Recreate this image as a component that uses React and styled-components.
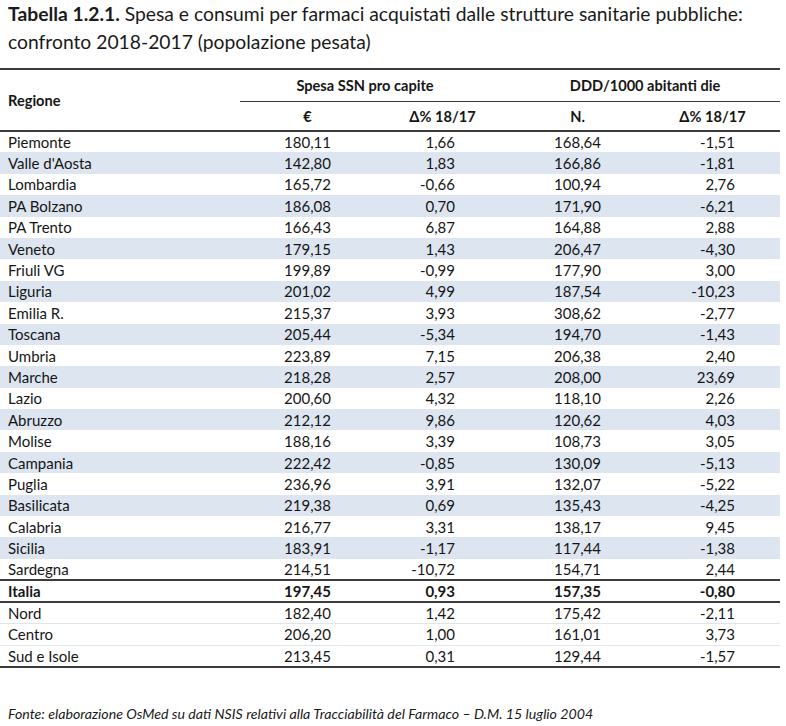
import React from "react";
import styled, { createGlobalStyle } from "styled-components";

const GlobalStyle = createGlobalStyle`
  body {
    margin: 0;
    background: #ffffff;
    font-family: "Lato", "Open Sans", sans-serif;
    color: #1a1a1a;
  }
`;

const Page = styled.div`
  width: 786px;
  height: 726px;
  overflow: hidden;
`;

const Title = styled.h1`
  margin: 0;
  padding: 0 8px;
  font-size: 19.3px;
  line-height: 28px;
  font-weight: 400;
  color: #1a1a1a;
  white-space: nowrap;
`;

const Table = styled.table`
  margin-top: 12px;
  width: 780px;
  border-collapse: collapse;
  table-layout: fixed;
  font-size: 15px;
  color: #161616;
  border-top: 2px solid #3c3c3c;
  border-bottom: 2px solid #3c3c3c;
`;

const HeadCell = styled.th`
  font-weight: 700;
  font-size: 14.6px;
  text-align: ${(p) => (p.left ? "left" : "center")};
  padding: ${(p) => (p.left ? "0 8px" : `0 ${p.pr || 0}px 0 0`)};
  height: ${(p) => p.h || 28}px;
  border-bottom: ${(p) => (p.rule ? "1.5px solid #3c3c3c" : "none")};
  white-space: nowrap;
`;

const HeadBottom = styled.tr`
  border-bottom: 2px solid #3c3c3c;
`;

const Row = styled.tr`
  height: 21.4px;
  background: ${(p) => (p.shaded ? "#dce5f0" : "#ffffff")};
  font-weight: ${(p) => (p.bold ? 700 : 400)};
  border-top: ${(p) => (p.bold ? "2px solid #3c3c3c" : p.thin ? "1px solid #dfe5ee" : "none")};
  border-bottom: ${(p) => (p.bold ? "2px solid #3c3c3c" : "none")};
`;

const Cell = styled.td`
  padding: 0 ${(p) => p.pr || 0}px 0 ${(p) => p.pl || 0}px;
  text-align: ${(p) => p.align || "center"};
  white-space: nowrap;
  line-height: 20px;
`;

const Footer = styled.p`
  margin: 37px 0 0;
  padding-left: 8px;
  font-size: 14.2px;
  font-style: italic;
  color: #1a1a1a;
  white-space: nowrap;
`;

const rows = [
  ["Piemonte", "180,11", "1,66", "168,64", "-1,51"],
  ["Valle d'Aosta", "142,80", "1,83", "166,86", "-1,81"],
  ["Lombardia", "165,72", "-0,66", "100,94", "2,76"],
  ["PA Bolzano", "186,08", "0,70", "171,90", "-6,21"],
  ["PA Trento", "166,43", "6,87", "164,88", "2,88"],
  ["Veneto", "179,15", "1,43", "206,47", "-4,30"],
  ["Friuli VG", "199,89", "-0,99", "177,90", "3,00"],
  ["Liguria", "201,02", "4,99", "187,54", "-10,23"],
  ["Emilia R.", "215,37", "3,93", "308,62", "-2,77"],
  ["Toscana", "205,44", "-5,34", "194,70", "-1,43"],
  ["Umbria", "223,89", "7,15", "206,38", "2,40"],
  ["Marche", "218,28", "2,57", "208,00", "23,69"],
  ["Lazio", "200,60", "4,32", "118,10", "2,26"],
  ["Abruzzo", "212,12", "9,86", "120,62", "4,03"],
  ["Molise", "188,16", "3,39", "108,73", "3,05"],
  ["Campania", "222,42", "-0,85", "130,09", "-5,13"],
  ["Puglia", "236,96", "3,91", "132,07", "-5,22"],
  ["Basilicata", "219,38", "0,69", "135,43", "-4,25"],
  ["Calabria", "216,77", "3,31", "138,17", "9,45"],
  ["Sicilia", "183,91", "-1,17", "117,44", "-1,38"],
  ["Sardegna", "214,51", "-10,72", "154,71", "2,44"],
];

const totals = [
  ["Italia", "197,45", "0,93", "157,35", "-0,80"],
  ["Nord", "182,40", "1,42", "175,42", "-2,11"],
  ["Centro", "206,20", "1,00", "161,01", "3,73"],
  ["Sud e Isole", "213,45", "0,31", "129,44", "-1,57"],
];

const DataRow = ({ r, shaded, bold, thin }) => (
  <Row shaded={shaded} bold={bold} thin={thin}>
    <Cell align="left" pl={8}>{r[0]}</Cell>
    <Cell>{r[1]}</Cell>
    <Cell align="right" pr={55}>{r[2]}</Cell>
    <Cell>{r[3]}</Cell>
    <Cell align="right" pr={45}>{r[4]}</Cell>
  </Row>
);

export default function App() {
  return (
    <Page>
      <GlobalStyle />
      <Title>
        <b>Tabella 1.2.1.</b> Spesa e consumi per farmaci acquistati dalle strutture sanitarie pubbliche:
        <br />
        confronto 2018-2017 (popolazione pesata)
      </Title>
      <Table>
        <colgroup>
          <col style={{ width: 240 }} />
          <col style={{ width: 135 }} />
          <col style={{ width: 135 }} />
          <col style={{ width: 135 }} />
          <col style={{ width: 135 }} />
        </colgroup>
        <thead>
          <tr>
            <HeadCell left rowSpan={2}>Regione</HeadCell>
            <HeadCell colSpan={2} h={31} pr={20} rule>Spesa SSN pro capite</HeadCell>
            <HeadCell colSpan={2} h={31} rule>DDD/1000 abitanti die</HeadCell>
          </tr>
          <HeadBottom>
            <HeadCell>€</HeadCell>
            <HeadCell>Δ% 18/17</HeadCell>
            <HeadCell>N.</HeadCell>
            <HeadCell>Δ% 18/17</HeadCell>
          </HeadBottom>
        </thead>
        <tbody>
          {rows.map((r, i) => (
            <DataRow key={r[0]} r={r} shaded={i % 2 === 1} />
          ))}
          <DataRow r={totals[0]} bold />
          <DataRow r={totals[1]} />
          <DataRow r={totals[2]} thin />
          <DataRow r={totals[3]} thin />
        </tbody>
      </Table>
      <Footer>
        Fonte: elaborazione OsMed su dati NSIS relativi alla Tracciabilità del Farmaco – D.M. 15 luglio 2004
      </Footer>
    </Page>
  );
}
